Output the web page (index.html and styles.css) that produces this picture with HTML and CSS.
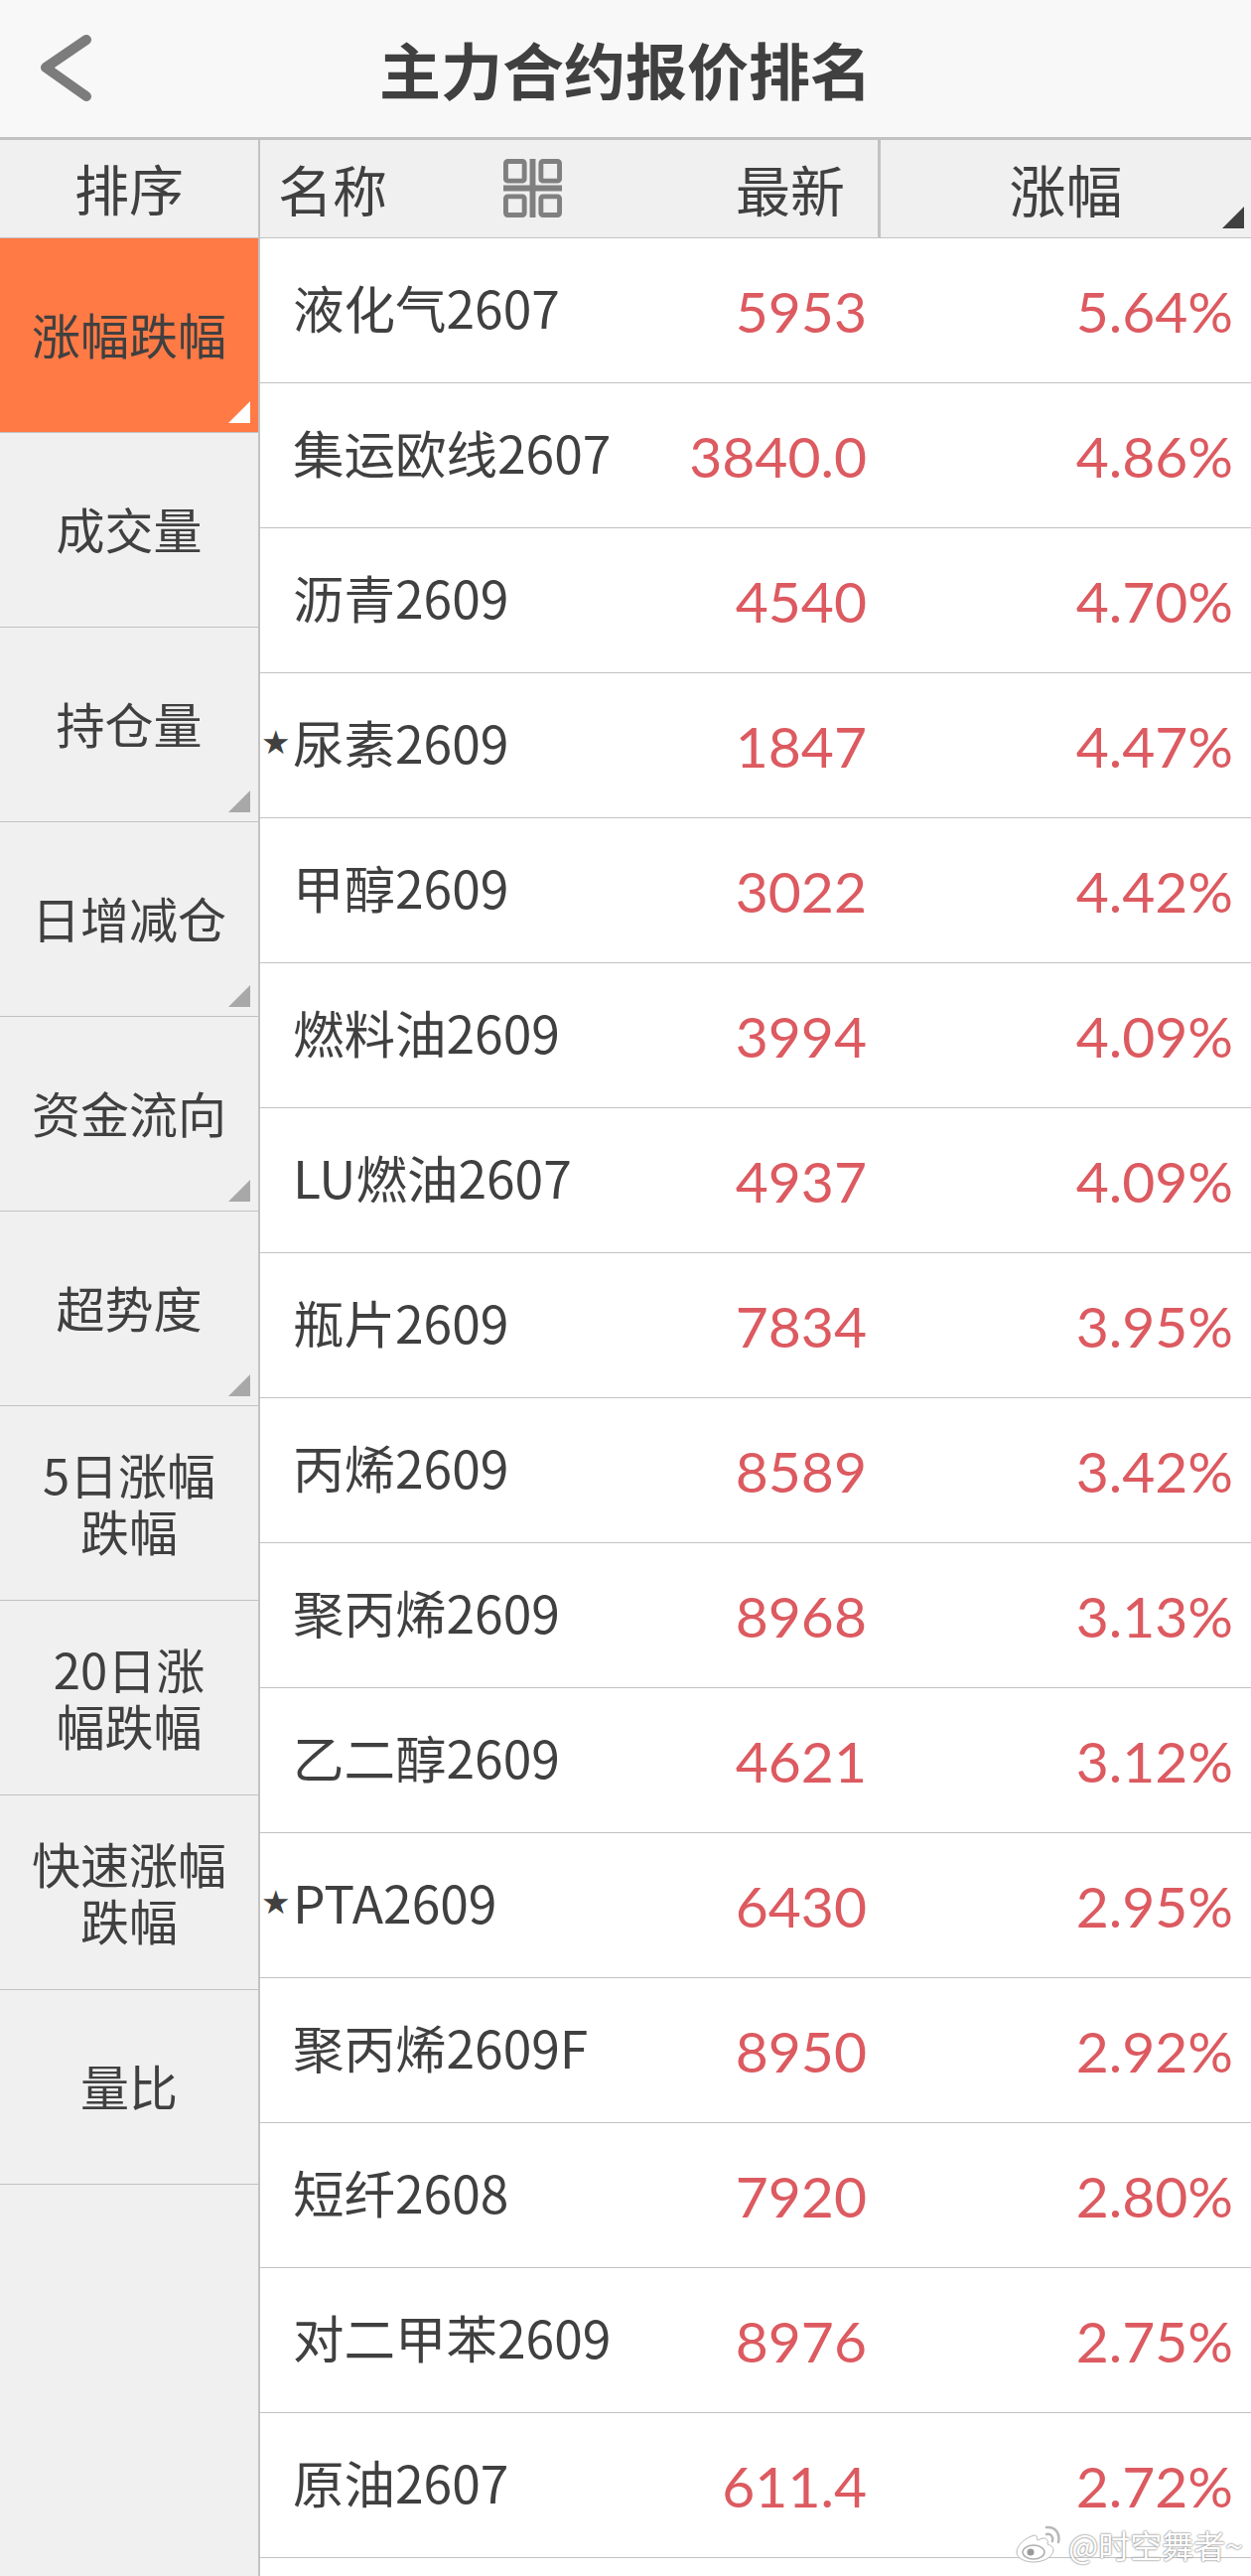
FILE: index.html
```html
<!DOCTYPE html>
<html lang="zh-CN">
<head>
<meta charset="utf-8">
<title>主力合约报价排名</title>
<link rel="stylesheet" href="styles.css">
</head>
<body>
<div class="page">
  <header class="titlebar">
    <svg class="back" viewBox="0 0 60 70" aria-hidden="true"><path d="M51 6 L10 34 L51 63"/></svg>
    <h1>主力合约报价排名</h1>
    <span></span>
  </header>
  <div class="content">
    <aside class="side">
      <div class="side-head">排序</div>
      <div class="side-item active mark">涨幅跌幅</div>
      <div class="side-item">成交量</div>
      <div class="side-item mark">持仓量</div>
      <div class="side-item mark">日增减仓</div>
      <div class="side-item mark">资金流向</div>
      <div class="side-item mark">超势度</div>
      <div class="side-item">5日涨幅<br>跌幅</div>
      <div class="side-item">20日涨<br>幅跌幅</div>
      <div class="side-item">快速涨幅<br>跌幅</div>
      <div class="side-item">量比</div>
    </aside>
    <main class="table">
      <div class="thead">
        <div class="th-name">名称
          <svg class="grid-icon" viewBox="0 0 60 60" aria-hidden="true">
            <rect x="2.5" y="2.5" width="19" height="20" rx="2"/><rect x="38.5" y="2.5" width="19" height="20" rx="2"/>
            <rect x="2.5" y="38.500" width="19" height="19" rx="2"/><rect x="38.500" y="38.500" width="19" height="19" rx="2"/>
            <path d="M30 0V60M0 30H60"/>
          </svg>
        </div>
        <div class="th-price">最新</div>
        <div class="th-pct">涨幅</div>
      </div>
      <div class="row"><span class="name">液化气2607</span><span class="price">5953</span><span class="pct">5.64%</span></div>
      <div class="row"><span class="name">集运欧线2607</span><span class="price">3840.0</span><span class="pct">4.86%</span></div>
      <div class="row"><span class="name">沥青2609</span><span class="price">4540</span><span class="pct">4.70%</span></div>
      <div class="row"><span class="name star">尿素2609</span><span class="price">1847</span><span class="pct">4.47%</span></div>
      <div class="row"><span class="name">甲醇2609</span><span class="price">3022</span><span class="pct">4.42%</span></div>
      <div class="row"><span class="name">燃料油2609</span><span class="price">3994</span><span class="pct">4.09%</span></div>
      <div class="row"><span class="name">LU燃油2607</span><span class="price">4937</span><span class="pct">4.09%</span></div>
      <div class="row"><span class="name">瓶片2609</span><span class="price">7834</span><span class="pct">3.95%</span></div>
      <div class="row"><span class="name">丙烯2609</span><span class="price">8589</span><span class="pct">3.42%</span></div>
      <div class="row"><span class="name">聚丙烯2609</span><span class="price">8968</span><span class="pct">3.13%</span></div>
      <div class="row"><span class="name">乙二醇2609</span><span class="price">4621</span><span class="pct">3.12%</span></div>
      <div class="row"><span class="name star">PTA2609</span><span class="price">6430</span><span class="pct">2.95%</span></div>
      <div class="row"><span class="name">聚丙烯2609F</span><span class="price">8950</span><span class="pct">2.92%</span></div>
      <div class="row"><span class="name">短纤2608</span><span class="price">7920</span><span class="pct">2.80%</span></div>
      <div class="row"><span class="name">对二甲苯2609</span><span class="price">8976</span><span class="pct">2.75%</span></div>
      <div class="row"><span class="name">原油2607</span><span class="price">611.4</span><span class="pct">2.72%</span></div>
    </main>
  </div>
  <div class="watermark">
    <svg class="weibo" viewBox="0 0 46 38" aria-hidden="true">
      <path class="wb-body" d="M19 10C10 12 1 20 1 27c0 6 8 10 17 10 11 0 20-6 20-12 0-4-4-5-6-6 1-3 0-6-4-6-3 0-5 2-6 2-1 0 0-3-1-4-1-1-1-1-2-1z"/>
      <ellipse class="wb-inner" cx="18" cy="27" rx="11" ry="7"/>
      <circle class="wb-eye" cx="15" cy="27" r="3.500"/>
      <path class="wb-wave" d="M31 9c4-1 7 2 6 7M31 2c9-1 14 6 12 15"/>
    </svg>
    <span>@时空舞者~</span>
  </div>
</div>
</body>
</html>
```
FILE: styles.css
```css
* { box-sizing: border-box; }
html, body { margin: 0; padding: 0; background: #fff; }
body { font-family: "Noto Sans CJK SC", "Noto Sans", sans-serif; color: #404040; }

.page { position: relative; width: 1260px; height: 2594px; overflow: hidden; }

.titlebar {
  height: 141px;
  display: grid;
  grid-template-columns: 1fr auto 1fr;
  align-items: center;
  background: #f8f8f8;
  border-bottom: 3px solid #c2c2c2;
}
.titlebar h1 { margin: 0; font-size: 62px; line-height: 1; font-weight: 700; color: #404040; }
.back { width: 60px; height: 70px; margin: 0 0 0 36px; }
.back path { fill: none; stroke: #7c7c7c; stroke-width: 10; stroke-linecap: round; stroke-linejoin: round; }

.content { display: flex; height: 2453px; }

.side { width: 262px; flex: none; background: #f0f0f0; border-right: 2px solid #c2c2c2; }
.side-head {
  height: 99px;
  padding-bottom: 3px;
  display: flex; align-items: center; justify-content: center;
  font-size: 55px; line-height: 1;
  border-bottom: 1px solid #c2c2c2;
}
.side-item {
  position: relative;
  height: 196px;
  padding-bottom: 4px;
  display: flex; align-items: center; justify-content: center;
  text-align: center;
  font-size: 49px; line-height: 57px;
  border-bottom: 1px solid #c2c2c2;
}
.side-item.active { background: #ff7a45; }
.mark::after {
  content: "";
  position: absolute; right: 8px; bottom: 9px;
  width: 22px; height: 22px;
  background: #a8a8a8;
  clip-path: polygon(100% 0, 100% 100%, 0 100%);
}
.active.mark::after { background: #fff; }

.table { flex: 1; min-width: 0; }
.thead {
  height: 99px;
  display: grid;
  grid-template-columns: 1fr auto 376px;
  background: #f0f0f0;
  border-bottom: 1px solid #c2c2c2;
  font-size: 55px; line-height: 1;
}
.th-name { position: relative; display: flex; align-items: center; padding: 0 0 2px 18px; }
.grid-icon { position: absolute; left: 245px; top: 19px; width: 59px; height: 59px; }
.grid-icon rect { fill: none; stroke: #808080; stroke-width: 5; }
.grid-icon path { fill: none; stroke: #808080; stroke-width: 6; }
.th-price { display: flex; align-items: center; padding: 0 33px 2px 0; }
.th-pct { position: relative; display: flex; align-items: center; justify-content: center; padding-bottom: 2px; border-left: 3px solid #c2c2c2; font-size: 57px; }
.th-pct::after {
  content: "";
  position: absolute; right: 7px; bottom: 9px;
  width: 22px; height: 22px;
  background: #404040;
  clip-path: polygon(100% 0, 100% 100%, 0 100%);
}

.row {
  height: 146px;
  display: grid;
  grid-template-columns: 360px 251px 1fr;
  align-items: center;
  border-bottom: 1px solid #c2c2c2;
  background: #fff;
}
.name { position: relative; padding-left: 33px; font-size: 51.500px; line-height: 1; white-space: nowrap; margin-top: -8px; }
.star::before {
  content: "★";
  position: absolute; left: 1px; top: 10px;
  font-size: 33px; line-height: 1; font-family: "DejaVu Sans", sans-serif;
  color: #404040;
}
.price, .pct {
  font-family: "Lato", "Noto Sans", sans-serif;
  font-size: 57px; line-height: 1;
  color: #dc5a60; text-align: right;
  margin-top: 2px;
}
.price { grid-column: 2; white-space: nowrap; }
.pct { padding-right: 18px; }

.watermark {
  position: absolute; left: 1023px; top: 2542px;
  display: flex; align-items: center; gap: 7px;
  color: #fff;
  font-size: 32px; line-height: 40px;
  text-shadow: 0 0 2px #8a8a8a, 0 0 2px #8a8a8a;
  white-space: nowrap;
}
.weibo { width: 46px; height: 38px; flex: none; }
.wb-body { fill: #fff; stroke: #b8b8b8; stroke-width: 1; }
.wb-inner { fill: #fff; stroke: #b0b0b0; stroke-width: 1.500; }
.wb-eye { fill: #999; }
.wb-wave { fill: none; stroke: #b8b8b8; stroke-width: 2.500; stroke-linecap: round; }
```
